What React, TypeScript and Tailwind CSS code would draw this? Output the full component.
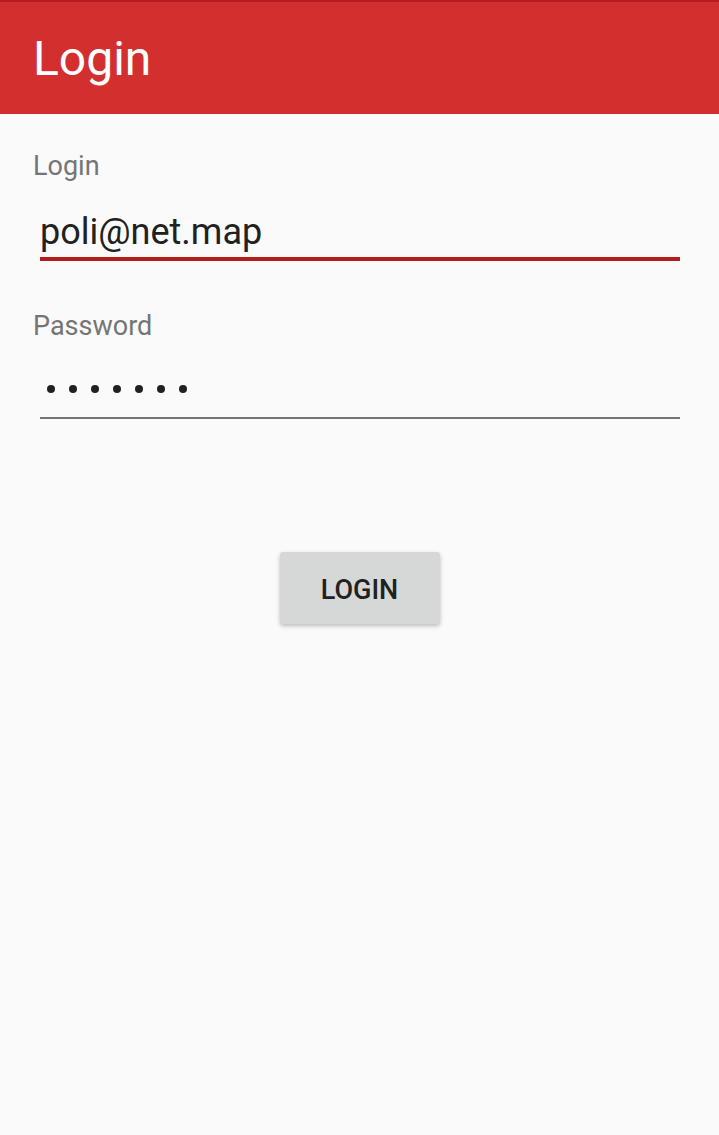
import React from 'react';

const font = { fontFamily: 'Roboto, "Noto Sans", sans-serif' };

const App = () => {
  const dots = Array.from({ length: 7 });

  return (
    <div className="min-h-[1135px] w-full bg-[#fafafa]" style={font}>
      {/* App bar */}
      <header className="h-[114px] bg-[#d32f2f] border-t-2 border-[#b71c1c] flex items-center px-[33px]">
        <h1 className="text-[48px] leading-[1.172] text-white font-normal pt-[2px]">Login</h1>
      </header>

      {/* Form */}
      <div className="px-[33px] pt-[37px]">
        <label className="block text-[27px] leading-[1.172] text-[#757575]">Login</label>
        <div className="ml-[7px] mr-[6px] mt-[28px]">
          <div className="text-[36px] leading-[1.172] text-[#212121]">poli@net.map</div>
          <div className="mt-[4px] h-[4px] bg-[#b71c1c]" />
        </div>

        <label className="block mt-[50px] text-[27px] leading-[1.172] text-[#757575]">Password</label>
        <div className="ml-[7px] mr-[6px] mt-[28px]">
          <div className="h-[42px] flex items-center gap-[14px] pl-[7px] pb-[4px]">
            {dots.map((_, i) => (
              <span key={i} className="block w-[8px] h-[8px] rounded-full bg-[#212121]" />
            ))}
          </div>
          <div className="mt-[5px] h-[2px] bg-[#757575]" />
        </div>
      </div>

      {/* Button */}
      <div className="flex justify-center mt-[133px]">
        <button className="w-[160px] h-[72px] pt-[4px] rounded-[3px] bg-[#d6d7d7] text-[#212121] text-[27px] font-medium shadow-[0_2px_4px_rgba(0,0,0,0.25)]">
          LOGIN
        </button>
      </div>
    </div>
  );
};

export default App;
